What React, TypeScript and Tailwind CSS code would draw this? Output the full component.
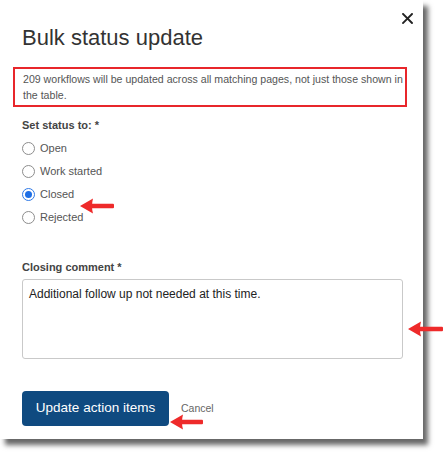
import React from "react";

function Arrow({ className, width = 34 }: { className: string; width?: number }) {
  return (
    <svg
      className={className}
      width={width}
      height={16}
      viewBox={`0 0 ${width} 16`}
      fill="#ee2a2a"
    >
      <path d="M0 8 L13 0.5 Q11 8 13 15.5 Z" />
      <rect x={9} y={5.8} width={width - 9} height={4.4} rx={1} />
    </svg>
  );
}

function Radio({ label, checked }: { label: string; checked?: boolean }) {
  return (
    <label className="flex h-[23px] items-center">
      {checked ? (
        <span className="flex h-[13px] w-[13px] items-center justify-center rounded-full border-[1.5px] border-[#2f79e6] bg-white">
          <span className="h-[7px] w-[7px] rounded-full bg-[#1f6fe5]" />
        </span>
      ) : (
        <span className="h-[13px] w-[13px] rounded-full border border-[#8d8d8d] bg-white" />
      )}
      <span className="ml-[5px] text-[11px] text-[#555555]">{label}</span>
    </label>
  );
}

export default function App() {
  return (
    <div className="h-[457px] w-[443px] overflow-hidden bg-white font-['Liberation_Sans',Arial,sans-serif]">
      <div className="relative h-[439px] w-[423px] bg-white pl-[22px] pr-[16px] pt-[24px] shadow-[5px_6px_5px_rgba(0,0,0,0.6)]">
        <button className="absolute right-[10px] top-[12px] flex h-[12px] w-[12px] items-center justify-center">
          <svg width="11" height="11" viewBox="0 0 11 11" stroke="#222" strokeWidth="1.9" strokeLinecap="square">
            <path d="M1 1 L10 10 M10 1 L1 10" />
          </svg>
        </button>

        <h1 className="text-[22px] leading-[28px] text-[#333333]">Bulk status update</h1>

        <div className="-ml-[9px] mt-[15px] w-[394px] border-2 border-[#e8262b] py-[2px] pl-[8px] pr-[2px] text-[10.6px] leading-[16px] text-[#555555]">
          209 workflows will be updated across all matching pages, not just those shown in the table.
        </div>

        <div className="mt-[10px] text-[11px] font-bold leading-[16px] text-[#444444]">Set status to: *</div>
        <div className="mt-[3.5px] flex flex-col">
          <Radio label="Open" />
          <Radio label="Work started" />
          <Radio label="Closed" checked />
          <Radio label="Rejected" />
        </div>

        <div className="mt-[30.5px] text-[11px] font-bold leading-[16px] text-[#444444]">Closing comment *</div>
        <textarea
          readOnly
          defaultValue="Additional follow up not needed at this time."
          className="mt-[4px] block h-[80px] w-[381px] resize-none rounded-[3px] border border-[#c9c9c9] px-[6px] py-[6px] text-[12px] leading-[16px] text-[#222222] outline-none"
        />

        <div className="mt-[32px] flex items-center">
          <button className="h-[35px] w-[147px] rounded-[4px] bg-[#0f4a80] text-[13.5px] text-white">
            Update action items
          </button>
          <span className="ml-[12px] text-[10.5px] text-[#666666]">Cancel</span>
        </div>

        <Arrow className="absolute left-[80px] top-[198px]" width={34} />
        <Arrow className="absolute left-[408px] top-[321px]" width={35} />
        <Arrow className="absolute left-[170px] top-[414px]" width={33} />
      </div>
    </div>
  );
}
